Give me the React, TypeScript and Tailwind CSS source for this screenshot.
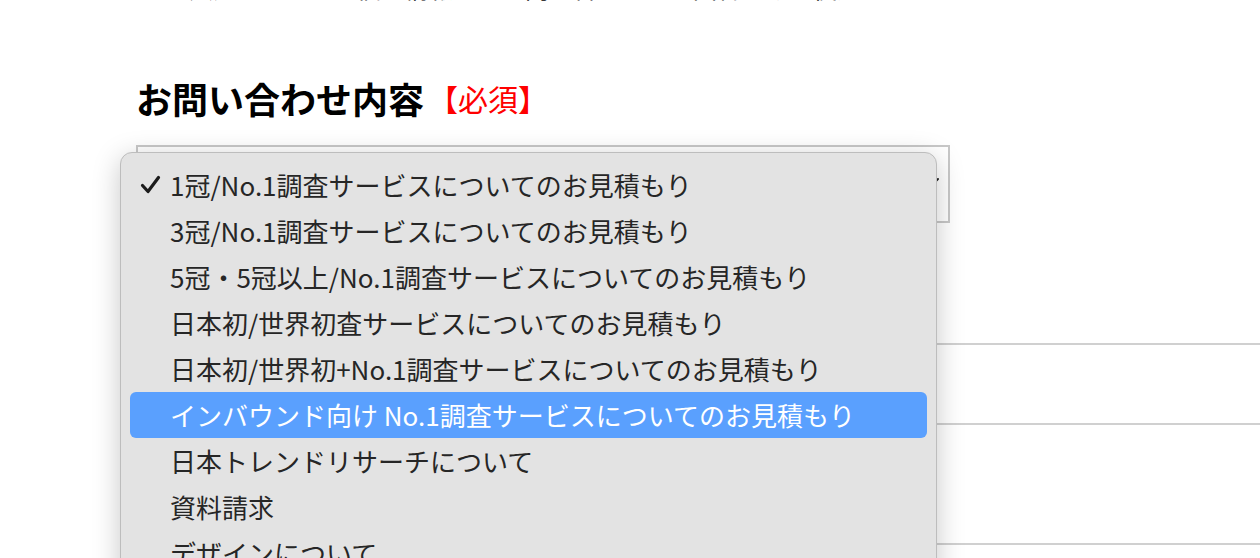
import React from "react";

const options = [
  "1冠/No.1調査サービスについてのお見積もり",
  "3冠/No.1調査サービスについてのお見積もり",
  "5冠・5冠以上/No.1調査サービスについてのお見積もり",
  "日本初/世界初査サービスについてのお見積もり",
  "日本初/世界初+No.1調査サービスについてのお見積もり",
  "インバウンド向け No.1調査サービスについてのお見積もり",
  "日本トレンドリサーチについて",
  "資料請求",
  "デザインについて",
];

const selected = 0;
const highlighted = 5;

function Check() {
  return (
    <svg
      className="absolute left-[10px] top-1/2 -translate-y-1/2"
      width="21"
      height="20"
      viewBox="0 0 21 20"
      fill="none"
    >
      <path
        d="M2.5 10.5 L8 16.5 L18.5 2.5"
        stroke="#1c1c1c"
        strokeWidth="3.2"
        strokeLinecap="round"
        strokeLinejoin="round"
      />
    </svg>
  );
}

export default function App() {
  return (
    <div className="relative h-[558px] w-[1260px] overflow-hidden bg-white font-['Noto_Sans_CJK_JP','Noto_Sans',sans-serif]">
      <div className="pl-[136px]">
        {/* line above, scrolled out of view */}
        <div className="h-[3px] overflow-hidden pl-[29px]">
          <p className="-mt-[24px] whitespace-nowrap text-[24px] leading-[24px] text-black">
            ご入力いただいた個人情報は、お問い合わせへの回答のみに使用いたします。
          </p>
        </div>

        <h2 className="mt-[77px] flex items-center text-[36px] font-bold leading-none text-black">
          お問い合わせ内容
          <span className="ml-[4px] text-[30px] font-normal text-[#ff0000]">【必須】</span>
        </h2>

        <div className="relative mt-[29px] h-[78px] w-[814px] border-2 border-[#c8c8c8] bg-white">
          <svg
            className="absolute right-[8px] top-[30px]"
            width="16"
            height="10"
            viewBox="0 0 16 10"
            fill="none"
          >
            <path d="M2 2 L8 8 L14 2" stroke="#222" strokeWidth="2" strokeLinecap="round" />
          </svg>
        </div>

        <div className="mt-[120px] h-[82px] w-[1200px] border-2 border-[#d0d0d0] bg-white" />
        <div className="mt-[118px] h-[100px] w-[1200px] border-2 border-[#d0d0d0] bg-white" />
      </div>

      {/* open native-style select menu */}
      <div className="absolute left-[120px] top-[152px] h-[440px] w-[817px] rounded-[12px] border border-[#bdbdbd] bg-[#e3e3e3] px-[9px] pt-[9px] shadow-[0_6px_28px_rgba(0,0,0,0.22)]">
        {options.map((label, i) => (
          <div
            key={label}
            className={
              i === highlighted
                ? "relative flex h-[46px] items-center rounded-[6px] bg-[#5aa0fe] pl-[40px] text-[26px] leading-none whitespace-nowrap text-white"
                : "relative flex h-[46px] items-center rounded-[6px] pl-[40px] text-[26px] leading-none whitespace-nowrap text-[#262626]"
            }
          >
            {i === selected && <Check />}
            {label}
          </div>
        ))}
      </div>
    </div>
  );
}
